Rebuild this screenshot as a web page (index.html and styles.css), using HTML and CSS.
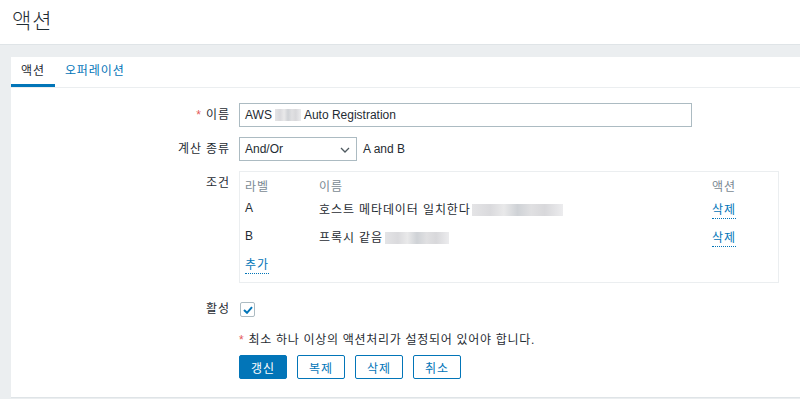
FILE: index.html
```html
<!DOCTYPE html>
<html lang="ko">
<head>
<meta charset="utf-8">
<link rel="stylesheet" href="styles.css">
</head>
<body>
<header class="page-header">
  <h1 class="title">액션</h1>
</header>
<main class="main">
  <div class="card">
    <nav class="tabs">
      <span class="tab active">액션</span>
      <span class="tab">오퍼레이션</span>
    </nav>
    <form class="form">
      <label class="label"><span class="req">*</span> 이름</label>
      <div class="field">
        <div class="input wide">AWS <span class="blur b1"></span> Auto Registration</div>
      </div>

      <label class="label">계산 종류</label>
      <div class="field row">
        <div class="input select">And/Or
          <svg class="chev" width="10" height="6" viewBox="0 0 10 6"><path d="M1 1 L5 5 L9 1" fill="none" stroke="#4f5a60" stroke-width="1.3"/></svg>
        </div>
        <span class="expr">A and B</span>
      </div>

      <label class="label top">조건</label>
      <div class="field">
        <div class="cond">
          <div class="crow head"><span class="c1">라벨</span><span class="c2">이름</span><span class="c3">액션</span></div>
          <div class="crow"><span class="c1">A</span><span class="c2">호스트 메타데이터 일치한다<span class="blur b2"></span></span><span class="c3"><a class="link">삭제</a></span></div>
          <div class="crow"><span class="c1">B</span><span class="c2">프록시 같음<span class="blur b3"></span></span><span class="c3"><a class="link">삭제</a></span></div>
          <div class="crow add"><span class="c1"><a class="link">추가</a></span></div>
        </div>
      </div>

      <label class="label act">활성</label>
      <div class="field act">
        <span class="check">
          <svg width="10" height="8" viewBox="0 0 10 8"><path d="M1 4 L4 6.8 L9 1.2" fill="none" stroke="#0275b8" stroke-width="2"/></svg>
        </span>
      </div>

      <div></div>
      <div class="field note"><span class="req">*</span> 최소 하나 이상의 액션처리가 설정되어 있어야 합니다.</div>

      <div></div>
      <div class="field buttons">
        <button type="button" class="btn primary">갱신</button>
        <button type="button" class="btn alt">복제</button>
        <button type="button" class="btn alt">삭제</button>
        <button type="button" class="btn alt">취소</button>
      </div>
    </form>
  </div>
</main>
</body>
</html>
```
FILE: styles.css
```css
* { box-sizing: border-box; }
html, body { margin: 0; padding: 0; }
body {
  background: #ebeef0;
  font-family: "Liberation Sans", Arial, "Noto Sans CJK KR", sans-serif;
  font-size: 12px;
  letter-spacing: 0.9px;
  color: #1f2c33;
  width: 800px;
  height: 399px;
  overflow: hidden;
}
.page-header {
  background: #fff;
  height: 45px;
  border-bottom: 1px solid #dfe4e7;
  padding: 8px 0 0 12px;
}
.title {
  margin: 0;
  font-weight: 300;
  font-size: 21px;
  line-height: 26px;
  letter-spacing: 1px;
  color: #1f2c33;
}
.main { padding: 12px 0 0 11px; }
.card {
  background: #fff;
  height: 341px;
  border-bottom: 1px solid #dfe4e7;
}
.tabs {
  display: flex;
  height: 31px;
  border-bottom: 1px solid #ebeef0;
}
.tab {
  padding: 0 10px;
  line-height: 28px;
  color: #0275b8;
  border-bottom: 3px solid transparent;
}
.tab.active {
  color: #1f2c33;
  border-bottom-color: #0275b8;
}
.form {
  display: grid;
  grid-template-columns: 218px 1fr;
  column-gap: 10px;
  row-gap: 10px;
  padding-top: 15px;
}
.label {
  text-align: right;
  line-height: 24px;
  margin-right: -1px;
}
.label.top { line-height: 20px; padding-top: 2px; }
.req { color: #e45959; }
.field { min-width: 0; }
.row { display: flex; align-items: center; gap: 6px; }
.input {
  height: 24px;
  border: 1px solid #acbbc2;
  padding: 0 5px;
  line-height: 22px;
  font-size: 12px;
  letter-spacing: 0;
  color: #1f2c33;
  white-space: nowrap;
}
.input.wide { width: 453px; }
.input.select {
  width: 118px;
  position: relative;
}
.chev { position: absolute; right: 6px; top: 9px; }
.expr { line-height: 24px; letter-spacing: 0; }
.blur {
  display: inline-block;
  height: 12px;
  vertical-align: -2px;
  background: linear-gradient(90deg, #e4e4e6 0%, #dadadd 20%, #e9e9ea 35%, #cfd2d6 50%, #e0e0e2 65%, #d8d8db 80%, #ececee 100%);
}
.b1 { width: 26px; }
.b2 { width: 91px; margin-left: 1px; }
.b3 { width: 64px; margin-left: 2px; }
.cond {
  width: 540px;
  height: 112px;
  border: 1px solid #ebeef0;
  padding: 4px 5px 0 5px;
}
.crow { display: flex; height: 28px; align-items: center; }
.crow.head { height: 18px; color: #7b8a93; }
.crow.add { height: 26px; }
.c1 { width: 74px; }
.c2 { width: 393px; white-space: nowrap; }
.c3 { flex: 1; }
.link {
  color: #0275b8;
  text-decoration: none;
  border-bottom: 1px dotted #0275b8;
  padding-bottom: 1px;
}
.label.act { padding-top: 4px; }
.field.act { padding-top: 9px; height: 27px; }
.check {
  display: flex;
  align-items: center;
  justify-content: center;
  width: 15px;
  height: 15px;
  margin-left: 1px;
  border: 1px solid #acbbc2;
  border-radius: 2px;
  background: #fff;
}
.note { line-height: 16px; padding-top: 1px; letter-spacing: 0.7px; }
.buttons { display: flex; gap: 10px; margin-top: -3px; }
.btn {
  width: 48px;
  height: 24px;
  padding: 0;
  border-radius: 2px;
  font-family: "Liberation Sans", Arial, "Noto Sans CJK KR", sans-serif;
  font-size: 12px;
  letter-spacing: 0.9px;
  cursor: pointer;
}
.btn.primary { background: #0275b8; border: 1px solid #0275b8; color: #fff; }
.btn.alt { background: #fff; border: 1px solid #0275b8; color: #0275b8; }
```
